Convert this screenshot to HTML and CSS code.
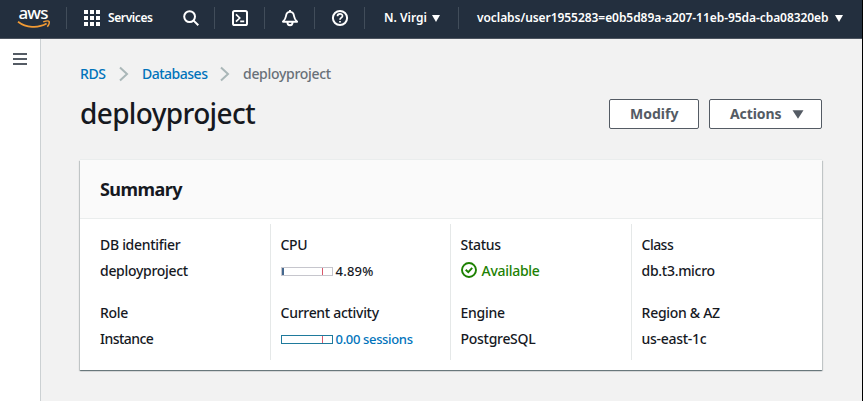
FILE: index.html
```html
<!DOCTYPE html>
<html lang="en">
<head>
<meta charset="utf-8">
<title>deployproject - RDS</title>
<link rel="stylesheet" href="styles.css">
</head>
<body>
<div class="window">
  <header class="topbar">
    <a class="logo">
      <svg width="66" height="38" viewBox="0 0 66 38">
        <text class="logo-text" x="18.4" y="19" textLength="30">aws</text>
        <path d="M18 21.7C26 27.8 38 28.6 46.6 23.6" fill="none" stroke="#f29b34" stroke-width="1.7"/>
        <path d="M43.2 21.8C46 20.9 48.8 20.8 49.2 21.6C49.5 22.5 48.7 25 47.3 26.7" fill="none" stroke="#f29b34" stroke-width="1.4"/>
      </svg>
    </a>
    <a class="services">
      <svg width="16" height="16" viewBox="0 0 16 16" fill="#fff">
        <path d="M0 0h4v4H0zM6 0h4v4H6zM12 0h4v4h-4zM0 6h4v4H0zM6 6h4v4H6zM12 6h4v4h-4zM0 12h4v4H0zM6 12h4v4H6zM12 12h4v4h-4z"/>
      </svg>
      <span class="services-text">Services</span>
    </a>
    <a class="tool search">
      <svg width="18" height="18" viewBox="0 0 18 18" fill="none" stroke="#fff" stroke-width="2"><circle cx="7.6" cy="7.6" r="5.4"/><path d="M11.4 11.4L16.300 16.300"/></svg>
    </a>
    <a class="tool">
      <svg width="18" height="18" viewBox="0 0 18 18" fill="none" stroke="#fff" stroke-width="2"><rect x="2" y="2" width="14" height="14" rx="1.6"/><path d="M5 5.3L8.7 9L5 12.7M9.2 12.4h4" stroke-width="1.7"/></svg>
    </a>
    <a class="tool">
      <svg width="18" height="18" viewBox="0 0 18 18" fill="none" stroke="#fff" stroke-width="1.9" stroke-linejoin="round"><path d="M9 1v2M9 2.900C6.500 2.900 5.300 4.600 5 7C4.700 9.600 3.600 11 1.900 12.700H16.100C14.400 11 13.300 9.600 13 7C12.700 4.600 11.500 2.900 9 2.900Z"/><path d="M6.400 13C6.400 17.300 11.600 17.300 11.600 13"/></svg>
    </a>
    <a class="tool">
      <svg width="18" height="18" viewBox="0 0 18 18" fill="none" stroke="#fff" stroke-width="2"><circle cx="9" cy="9" r="7.100"/><path d="M6.500 7.300C6.500 4.100 11.500 4.200 11.500 6.900C11.500 8.600 9 8.600 9 10.700M9 11.900v1.700" stroke-width="1.7"/></svg>
    </a>
    <a class="region"><span class="region-text">N. Virgi</span><svg width="8" height="7" viewBox="0 0 8 7"><path d="M0 0h8L4 7z" fill="#fff"/></svg></a>
    <a class="account"><span class="account-text">voclabs/user1955283=e0b5d89a-a207-11eb-95da-cba08320eb</span><svg width="8" height="7" viewBox="0 0 8 7"><path d="M0 0h8L4 7z" fill="#fff"/></svg></a>
  </header>
  <div class="body">
    <nav class="rail">
      <svg width="14" height="12" viewBox="0 0 14 12"><path d="M0 1h14M0 6h14M0 11h14" stroke="#545b64" stroke-width="2"/></svg>
    </nav>
    <main class="main">
      <div class="crumbs">
        <a class="crumb-rds">RDS</a>
        <svg width="10" height="16" viewBox="0 0 10 16"><path d="M1 1.500L8 8L1 14.500" fill="none" stroke="#aab7b8" stroke-width="2"/></svg>
        <a class="crumb-databases">Databases</a>
        <svg width="10" height="16" viewBox="0 0 10 16"><path d="M1 1.500L8 8L1 14.500" fill="none" stroke="#aab7b8" stroke-width="2"/></svg>
        <span class="crumb-current">deployproject</span>
      </div>
      <div class="title-row">
        <h1>deployproject</h1>
        <div class="buttons">
          <button class="button modify">Modify</button>
          <button class="button actions">Actions<svg width="12" height="9" viewBox="0 0 12 9"><path d="M.500.300h11L6 8.700z" fill="#545b64"/></svg></button>
        </div>
      </div>
      <section class="panel">
        <div class="panel-head"><h2>Summary</h2></div>
        <div class="grid">
          <dl>
            <dt>DB identifier</dt><dd>deployproject</dd>
            <dt>Role</dt><dd class="tight">Instance</dd>
          </dl>
          <dl>
            <dt class="wide">CPU</dt><dd class="metric percent"><span class="meter"><i class="fill"></i><i class="mark"></i></span>4.89%</dd>
            <dt>Current activity</dt><dd class="metric sessions"><span class="meter"><i class="mark"></i></span>0.00 sessions</dd>
          </dl>
          <dl>
            <dt>Status</dt><dd class="ok"><svg width="16" height="16" viewBox="0 0 16 16" fill="none" stroke="#1d8102" stroke-width="1.900"><circle cx="8" cy="8" r="7"/><path d="M4.700 7.700L7.300 10.200L11.200 5.800"/></svg>Available</dd>
            <dt>Engine</dt><dd>PostgreSQL</dd>
          </dl>
          <dl>
            <dt class="tight">Class</dt><dd>db.t3.micro</dd>
            <dt>Region &amp; AZ</dt><dd>us-east-1c</dd>
          </dl>
        </div>
      </section>
    </main>
  </div>
</div>
</body>
</html>
```
FILE: styles.css
```css
* { box-sizing: border-box; }
body {
  margin: 0;
  background: #000;
  font: 500 14px/22px "Noto Sans", "Open Sans", sans-serif;
  letter-spacing: -0.3px;
  color: #16191f;
}
svg { display: block; flex: none; }
.window { width: 862px; height: 401px; display: flex; flex-direction: column; background: #f2f2f2; overflow: hidden; }

.topbar {
  display: flex;
  height: 39px;
  flex: none;
  background: #232f3e;
  border-bottom: 1px solid #4b535e;
  color: #fff;
  font-size: 12px;
  font-weight: 600;
  white-space: nowrap;
}
.topbar > a { display: flex; align-items: center; height: 36px; position: relative; }
.topbar > a:not(:first-child):not(.search)::before {
  content: "";
  position: absolute;
  left: 0;
  top: 7px;
  width: 1px;
  height: 22px;
  background: #414d5a;
}
.logo { width: 66px; align-items: flex-start !important; }
.logo-text { font: 500 17px "Noto Sans", sans-serif; fill: #fff; letter-spacing: 0; }
.services { width: 115px; padding-left: 18px; gap: 8px; }
.services-text { letter-spacing: -0.4px; }
.tool { width: 50px; padding-left: 17px; }
.search { width: 33px; padding-left: 1px; }
.region { width: 94px; padding-left: 20px; gap: 5px; }
.region-text { letter-spacing: 0; }
.account { padding-left: 19px; gap: 6px; }
.account-text { letter-spacing: -0.06px; }

.body { display: flex; flex: 1; }
.rail { width: 41px; padding: 14px 0 0 13px; background: #fff; border-right: 1px solid #ccd1d3; }
.main { flex: 1; padding: 24px 40px 0 39px; }

.crumbs { display: flex; align-items: center; color: #687078; }
.crumbs a { color: #0073bb; }
.crumb-rds { width: 39px; letter-spacing: -0.4px; }
.crumb-databases { width: 68px; margin-left: 13px; letter-spacing: -0.5px; }
.crumb-databases + svg { margin-left: 10px; }
.crumb-current { margin-left: 13px; }

.title-row { display: flex; justify-content: space-between; margin-top: 10px; height: 65px; }
h1 { margin: 0; font-size: 28px; line-height: 36px; font-weight: 500; letter-spacing: -0.65px; }
.buttons { display: flex; gap: 10px; padding-top: 4px; }
.button {
  display: flex;
  align-items: center;
  height: 30px;
  padding: 0 20px;
  border: 1px solid #545b64;
  border-radius: 2px;
  background: #fff;
  color: #545b64;
  font: 700 14px/22px "Noto Sans", "Open Sans", sans-serif;
  letter-spacing: 0;
}
.modify { width: 90px; }
.actions { width: 113px; gap: 11px; letter-spacing: -0.1px; }

.panel {
  width: 742px;
  height: 210px;
  background: #fff;
  box-shadow: 0 1px 1px 0 rgba(0, 28, 36, 0.4), 1px 1px 1px 0 rgba(0, 28, 36, 0.15), -1px 1px 1px 0 rgba(0, 28, 36, 0.15), 0 -1px 0 #eaeded;
}
.panel-head { height: 59px; padding: 18px 20px; background: #fafafa; border-bottom: 1px solid #eaeded; }
h2 { margin: 0; font-size: 18px; line-height: 22px; font-weight: 700; letter-spacing: -0.55px; }

.grid { display: grid; grid-template-columns: 190px 180px 181px 1fr; padding-top: 5px; }
dl { margin: 0; height: 136px; padding: 10px 0 0 9.6px; border-left: 1px solid #e5e8e8; }
dl:first-child { padding-left: 20px; border-left: 0; }
dt, dd { margin: 0; height: 22px; white-space: nowrap; }
dd { margin: 4px 0 20px; }
.tight { letter-spacing: -0.55px; }
.wide { letter-spacing: -0.4px; }
.metric { display: flex; align-items: center; gap: 3px; font-size: 13px; }
.percent { letter-spacing: 0.2px; }
.sessions { color: #0073bb; letter-spacing: -0.35px; }
.meter { position: relative; width: 52px; height: 9px; border: 1px solid #c6c6cd; }
.sessions .meter { border-color: #1f7a9c; }
.fill { position: absolute; left: 0; top: 0; width: 2px; height: 7px; background: #45688e; }
.mark { position: absolute; left: 40px; top: 0; width: 1px; height: 7px; background: #d9586c; }
.ok { display: flex; align-items: center; gap: 5px; color: #1d8102; }
.ok svg { margin-top: -2px; }
```
